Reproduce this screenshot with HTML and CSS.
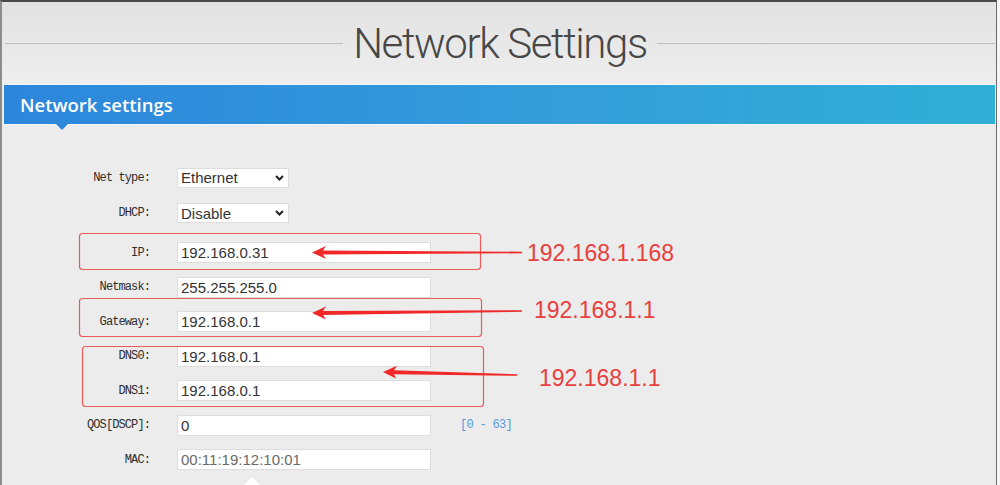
FILE: index.html
```html
<!DOCTYPE html>
<html lang="en">
<head>
  <meta charset="UTF-8">
  <meta name="viewport" content="width=device-width, initial-scale=1.0">
  <title>Network Settings</title>
  <link rel="stylesheet" href="styles.css">
</head>
<body>
  <div class="frame">
    <div class="page-head">
      <span class="rule"></span>
      <h1>Network Settings</h1>
      <span class="rule"></span>
    </div>

    <div class="bar">Network settings</div>

    <form class="form">
      <div class="row sel">
        <label>Net type:</label>
        <span class="pick">
          <select><option>Ethernet</option><option>Wireless</option></select>
          <svg class="chev" width="9" height="6" viewBox="0 0 9 6"><path d="M1 1l3.5 3.5L8 1" fill="none" stroke="#222" stroke-width="2"/></svg>
        </span>
      </div>
      <div class="row sel">
        <label>DHCP:</label>
        <span class="pick">
          <select><option>Disable</option><option>Enable</option></select>
          <svg class="chev" width="9" height="6" viewBox="0 0 9 6"><path d="M1 1l3.5 3.5L8 1" fill="none" stroke="#222" stroke-width="2"/></svg>
        </span>
      </div>
      <div class="row gap">
        <label>IP:</label>
        <input type="text" value="192.168.0.31">
      </div>
      <div class="row">
        <label>Netmask:</label>
        <input type="text" value="255.255.255.0">
      </div>
      <div class="row">
        <label>Gateway:</label>
        <input type="text" value="192.168.0.1">
      </div>
      <div class="row">
        <label>DNS0:</label>
        <input type="text" value="192.168.0.1">
      </div>
      <div class="row">
        <label>DNS1:</label>
        <input type="text" value="192.168.0.1">
      </div>
      <div class="row">
        <label>QOS[DSCP]:</label>
        <input type="text" value="0">
        <span class="hint">[0 - 63]</span>
      </div>
      <div class="row">
        <label>MAC:</label>
        <input type="text" class="ro" value="00:11:19:12:10:01" readonly>
      </div>
    </form>
    <div class="tip"></div>
  </div>

  <!-- red markup drawn over the screen -->
  <div class="notes">
    <svg width="1000" height="485" viewBox="0 0 1000 485">
      <g fill="none" stroke="#ec5b5b" stroke-width="1.2">
        <rect x="79.5" y="233.5" width="401" height="36" rx="3"/>
        <rect x="79.5" y="298.5" width="402" height="38" rx="3"/>
        <rect x="82.5" y="346.5" width="401" height="60" rx="3"/>
      </g>
      <g fill="#f02828">
        <polygon points="312,252.5 326,246 323,250.5 522,251.7 522,253.3 323,254.5 326,259"/>
        <polygon points="312,313 326,306.5 323,311 522,310.2 522,311.8 323,315 326,319.5"/>
        <polygon points="383,372 397,365.8 394,370.2 517,374.2 517,375.8 394,374.2 396,378.5"/>
      </g>
    </svg>
    <span class="note n1">192.168.1.168</span>
    <span class="note n2">192.168.1.1</span>
    <span class="note n3">192.168.1.1</span>
  </div>
</body>
</html>
```

FILE: styles.css
```css
body { margin: 0; height: 485px; overflow: hidden; position: relative; background: #f6f6f6; font-family: 'Liberation Sans', Arial, sans-serif; }
.frame { height: 485px; box-sizing: border-box; margin-right: 3px; border-top: 2px solid #4a4a4a; border-left: 2px solid #8c8c8c; border-right: 1px solid #6a6a6a; background: #ececec; }

.page-head { height: 82px; display: flex; align-items: center; gap: 10px; padding: 0 1px 0 3px; background: linear-gradient(#e2e2e2, #eeeeee); }
.rule { flex: 1; height: 1px; background: #bcbcbc; }
.page-head h1 { margin: 0; font-family: Roboto, sans-serif; font-weight: 300; font-size: 42px; letter-spacing: -1.4px; color: #474747; }

.bar { position: relative; margin: 1px 1px 0 2px; height: 39px; padding-left: 16px; line-height: 39px; color: #fff; font-family: 'Open Sans', sans-serif; font-weight: 600; font-size: 18.5px; background: linear-gradient(90deg, #2c86dc, #349dd9 55%, #30afd6); box-shadow: 0 -1px 0 #f7f7f7, 0 1px 0 #f7f7f7; }
.bar::after { content: ''; position: absolute; left: 52px; top: 100%; border: 6px solid transparent; border-bottom: 0; border-top-color: #2d87da; }

.form { padding-top: 36px; margin: 0; }
.row { display: flex; align-items: center; height: 34.5px; }
.row.sel { height: 35.5px; }
.row.gap { margin-top: 4.5px; }
.row label { width: 148px; margin-right: 27px; text-align: right; font-family: 'Liberation Mono', monospace; font-size: 12px; letter-spacing: -0.9px; color: #2e2e2e; }

input, select { box-sizing: border-box; border: 1px solid #dddddd; background: #fff; font-family: 'Liberation Sans', Arial, sans-serif; font-size: 15px; color: #333; outline: none; }
input { width: 254px; height: 21px; padding: 0 3px; }
input.ro { color: #6a6a6a; }
.pick { position: relative; display: flex; }
select { width: 112px; height: 20px; padding: 0 3px; appearance: none; -webkit-appearance: none; border-radius: 0; }
.chev { position: absolute; right: 5px; top: 7px; }
.hint { margin-left: 29px; font-family: 'Liberation Mono', monospace; font-size: 12px; letter-spacing: -0.7px; color: #5a9ad6; }

.tip { width: 0; height: 0; margin-left: 241px; border-left: 9.5px solid transparent; border-right: 9.5px solid transparent; border-bottom: 9px solid #fff; }

.notes { position: absolute; top: 0; left: 0; width: 1000px; height: 485px; pointer-events: none; }
.notes svg { position: absolute; top: 0; left: 0; }
.note { position: absolute; font-family: 'Liberation Sans', Arial, sans-serif; font-size: 23px; line-height: 26px; color: #e8403d; }
.n1 { left: 527px; top: 240px; }
.n2 { left: 534px; top: 297px; }
.n3 { left: 539px; top: 365px; }
```
